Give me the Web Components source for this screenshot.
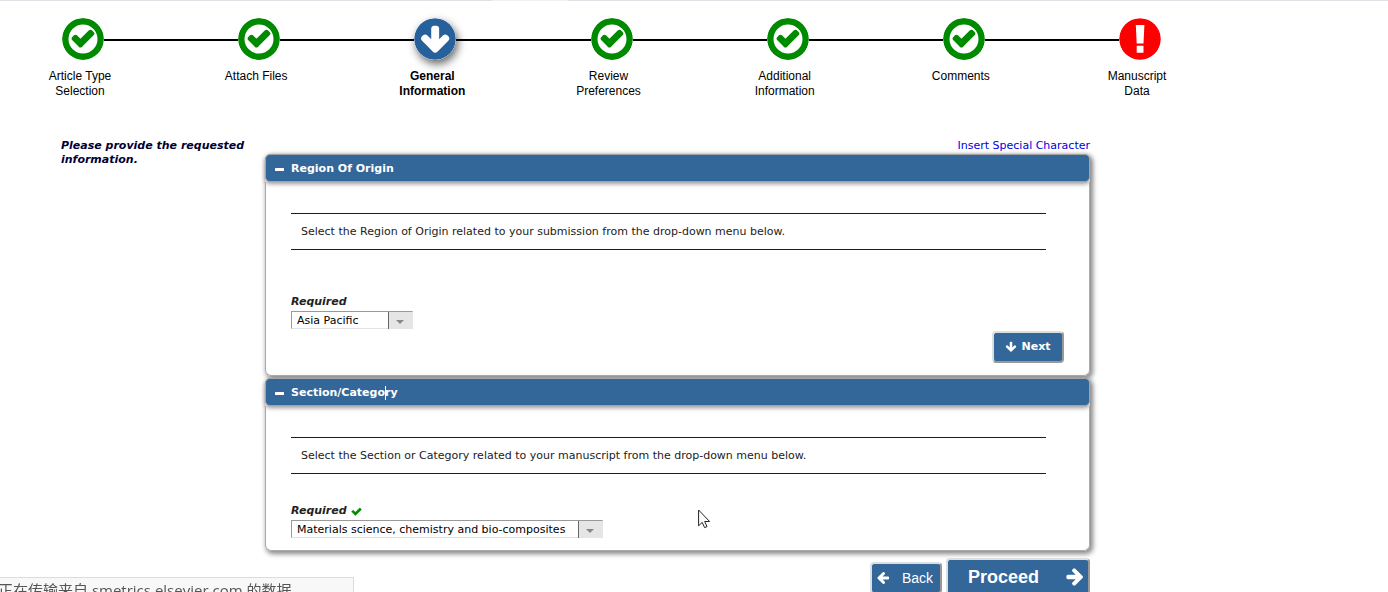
<!DOCTYPE html>
<html lang="en">
<head>
<meta charset="utf-8">
<title>General Information</title>
<style>
  body {
    margin: 0;
    background: #fff;
    color: #222;
    font: 11px/14px "DejaVu Sans", Verdana, sans-serif;
    overflow: hidden;
  }
</style>
</head>
<body>
<submission-page></submission-page>

<script>
const CHECK = "M1671 566q0 40-28 68l-724 724-136 136q-28 28-68 28t-68-28l-136-136-362-362q-28-28-28-68t28-68l136-136q28-28 68-28t68 28l294 295 656-657q28-28 68-28t68 28l136 136q28 28 28 68z";
const ARROW = "M1675 832q0 53-37 90l-651 652q-39 37-91 37-53 0-90-37l-651-652q-38-36-38-90 0-53 38-91l74-75q39-37 91-37 53 0 90 37l294 294v-704q0-52 38-90t90-38h128q52 0 90 38t38 90v704l294-294q37-37 90-37 52 0 91 37l75 75q37 39 37 91z";

const STEP_ICONS = {
  done: `
    <circle cx="21" cy="21" r="17.7" fill="#fff" stroke="#008a00" stroke-width="6.4"/>
    <path transform="translate(8.6 7.8) scale(.0138)" fill="#008a00" stroke="#008a00" stroke-width="110" d="${CHECK}"/>`,
  current: `
    <circle cx="21" cy="21" r="20.8" fill="#26619c"/>
    <path transform="translate(5.6 6.1) scale(.0174)" fill="#fff" stroke="#fff" stroke-width="70" d="${ARROW}"/>`,
  error: `
    <circle cx="21" cy="21" r="20.8" fill="#f00"/>
    <path fill="#fff" d="M16.8 7h8.6l-.9 18.4h-6.8zM17.7 27.7h6.8v7h-6.8z"/>`,
};

/** Attaches an open shadow root holding the given markup. */
function render(host, html) {
  const root = host.attachShadow({ mode: "open" });
  root.innerHTML = html;
  return root;
}

/** <progress-step state="done|current|error"> one stop of the stepper. */
class ProgressStep extends HTMLElement {
  constructor() {
    super();
    const state = this.getAttribute("state") ?? "done";
    render(this, `
      <style>
        :host { display: block; flex: 1 1 0; min-width: 120px; }
        :host(:last-child) { flex: 0 0 120px; }
        .track { display: flex; align-items: center; }
        .track::before, .track::after {
          content: "";
          height: 2px;
          padding-top: 2px;
          background: #000 content-box;
        }
        .track::before { width: 42px; }
        .track::after { flex: 1; }
        :host(:first-child) .track::before,
        :host(:last-child) .track::after { background: none; }
        svg { display: block; flex: none; width: 42px; height: 42px; border-radius: 50%; }
        :host([state="current"]) svg { box-shadow: 2px 4px 8px rgba(0, 0, 0, 0.6); }
        .label {
          width: 120px;
          margin-top: 9px;
          color: #000;
          font: 12px/15px "Liberation Sans", Arial, sans-serif;
          text-align: center;
        }
        :host([state="current"]) .label { font-weight: bold; }
      </style>
      <div class="track"><svg viewBox="0 0 42 42" aria-hidden="true">${STEP_ICONS[state]}</svg></div>
      <div class="label"><slot></slot></div>
    `);
  }
}

/** <progress-stepper> row that holds the steps. */
class ProgressStepper extends HTMLElement {
  constructor() {
    super();
    render(this, `
      <style>
        :host { display: flex; padding: 17px 191px 0 20px; }
      </style>
      <slot></slot>
    `);
  }
}

/** <form-panel> collapsible panel with a "heading" slot. */
class FormPanel extends HTMLElement {
  constructor() {
    super();
    const root = render(this, `
      <style>
        :host { display: block; border-radius: 6px; box-shadow: 2px 2px 5px 1px #888; }
        button {
          display: flex;
          align-items: center;
          gap: 7px;
          box-sizing: border-box;
          position: relative;
          width: 100%;
          height: 28px;
          padding: 2px 9px 0;
          border: 1px solid #a3a3a3;
          border-radius: 5px;
          background: #336699;
          box-shadow: 0 2px 4px #999;
          color: #fff;
          font: inherit;
          font-weight: bold;
        }
        svg { width: 9px; height: 3px; }
        .body {
          padding: 31px 25px 12px;
          border: 1px solid #aaa;
          border-top: 0;
          border-radius: 0 0 6px 6px;
          background: #fff;
        }
        .body[hidden] { display: none; }
      </style>
      <button type="button" aria-expanded="true">
        <svg viewBox="0 0 9 3" aria-hidden="true"><rect width="9" height="3" rx="0.5" fill="#fff"/></svg>
        <span><slot name="heading"></slot></span>
      </button>
      <div class="body"><slot></slot></div>
    `);
    const button = root.querySelector("button");
    const body = root.querySelector(".body");
    button.addEventListener("click", () => {
      body.hidden = !body.hidden;
      button.setAttribute("aria-expanded", String(!body.hidden));
    });
  }
}

/** <required-select value="..." complete> labelled drop-down. */
class RequiredSelect extends HTMLElement {
  constructor() {
    super();
    const check = this.hasAttribute("complete")
      ? `<svg class="check" viewBox="0 0 1792 1792" aria-hidden="true"><path fill="#008a00" stroke="#008a00" stroke-width="80" d="${CHECK}"/></svg>`
      : "";
    render(this, `
      <style>
        :host { display: flex; flex-direction: column; align-items: flex-start; gap: 2px; }
        label { display: flex; align-items: center; gap: 4px; font-weight: bold; font-style: italic; }
        .check { width: 11px; height: 11px; }
        .field { display: grid; grid-template-columns: 1fr 25px; min-width: var(--field-width, 122px); }
        select {
          grid-area: 1 / 1 / 2 / 3;
          appearance: none;
          box-sizing: border-box;
          height: 18px;
          margin: 0;
          padding: 1px 29px 0 5px;
          border: 1px solid #999;
          border-right-color: #e3e3e3;
          border-bottom-color: #e3e3e3;
          border-radius: 0;
          background: #fff;
          color: #000;
          font: inherit;
        }
        .arrow {
          grid-area: 1 / 2;
          display: flex;
          align-items: center;
          justify-content: center;
          box-sizing: border-box;
          padding: 3px 3px 0 0;
          margin-top: 1px;
          border-left: 1px solid #666;
          background: #e5e5e5;
          pointer-events: none;
          z-index: 1;
        }
        .arrow svg { width: 8px; height: 4px; }
      </style>
      <label for="choice">Required ${check}</label>
      <div class="field">
        <select id="choice"><option>${this.getAttribute("value")}</option></select>
        <span class="arrow"><svg viewBox="0 0 8 4" aria-hidden="true"><path fill="#888" d="M0 0h8L4 4z"/></svg></span>
      </div>
    `);
  }
}

/** <action-button kind="next|back|proceed"> */
class ActionButton extends HTMLElement {
  constructor() {
    super();
    render(this, `
      <style>
        :host { display: block; }
        button {
          display: flex;
          align-items: center;
          justify-content: center;
          gap: 4px;
          box-sizing: border-box;
          width: 72px;
          height: 32px;
          margin: 0;
          padding: 0;
          border: 2px solid;
          border-color: #dcdfe0 #999 #999 #dcdfe0;
          border-radius: 4px;
          background: #336699;
          color: #fff;
          font: inherit;
          font-weight: bold;
        }
        svg { width: 12px; height: 12px; }
        :host([kind="back"]) button {
          gap: 12px;
          padding-right: 3px;
          font: 14px "Liberation Sans", Arial, sans-serif;
        }
        :host([kind="back"]) svg { width: 14px; height: 14px; transform: rotate(90deg); }
        :host([kind="proceed"]) button {
          flex-direction: row-reverse;
          justify-content: space-between;
          width: 144px;
          height: 40px;
          padding: 0 3px 2px 20px;
          font: bold 18px "Liberation Sans", Arial, sans-serif;
        }
        :host([kind="proceed"]) svg { width: 20px; height: 20px; transform: rotate(-90deg); }
      </style>
      <button type="button">
        <svg viewBox="0 0 1792 1792" aria-hidden="true"><path fill="#fff" d="${ARROW}"/></svg>
        <slot></slot>
      </button>
    `);
  }
}

/** <text-caret> insertion point that takes no room in the line. */
class TextCaret extends HTMLElement {
  constructor() {
    super();
    // no whitespace in the markup, it would open a gap in the word
    render(this, `<style>
        :host { position: relative; }
        i { position: absolute; top: 0; left: 0; width: 1px; height: 14px; background: #fff; }
      </style><i></i>`);
  }
}

/** <mouse-pointer> */
class MousePointer extends HTMLElement {
  constructor() {
    super();
    render(this, `
      <style>
        :host { position: absolute; left: 698px; top: 509px; z-index: 2; pointer-events: none; }
        svg { display: block; width: 13px; height: 20px; }
      </style>
      <svg viewBox="0 0 13 20" aria-hidden="true">
        <path d="M.6 1v15.8l3.6-3.4 2.4 5.2 2.4-1-2.3-5.1h4.9z" fill="#fff" stroke="#222" stroke-width="1"/>
      </svg>`);
  }
}

/** <status-bubble> browser status text in the window corner. */
class StatusBubble extends HTMLElement {
  constructor() {
    super();
    render(this, `
      <style>
        :host {
          position: fixed;
          left: 0;
          bottom: -10px;
          box-sizing: border-box;
          width: 354px;
          height: 25px;
          border: 1px solid #dcdcdc;
          border-left: 0;
          background: #f8f8f8;
          color: #555;
          font: 15px/24px "Open Sans", "Noto Sans CJK SC", sans-serif;
          white-space: nowrap;
          text-indent: -2px;
        }
      </style>
      <slot></slot>
    `);
  }
}

/** <submission-page> the whole form. */
class SubmissionPage extends HTMLElement {
  constructor() {
    super();
    render(this, `
      <style>
        :host { display: block; }
        .edge {
          height: 1px;
          background: linear-gradient(90deg, #dee1e6 492px, #f0f2f5 492px 568px, #dee1e6 568px);
        }
        main {
          display: grid;
          grid-template-columns: 204px minmax(0, 1fr);
          margin: 40px 298px 0 61px;
        }
        .intro { margin: 0; color: #003; font-weight: bold; font-style: italic; }
        .form { display: flex; flex-direction: column; gap: 2px; }
        .form > a { align-self: flex-end; margin-bottom: -1px; color: #0000e0; text-decoration: none; }
        .note {
          margin: 0 18px 45px 0;
          padding: 11px 10px 10px;
          border: solid #002244;
          border-width: 1px 0;
        }
        .note.short { margin-bottom: 30px; }
        .next { display: flex; justify-content: flex-end; margin-top: 2px; }
        .next + * { margin: 0; }
        footer { display: flex; align-items: center; justify-content: flex-end; gap: 4px; margin-top: 5px; }
      </style>
      <div class="edge"></div>
      <progress-stepper>
        <progress-step state="done">Article Type<br>Selection</progress-step>
        <progress-step state="done">Attach Files</progress-step>
        <progress-step state="current">General<br>Information</progress-step>
        <progress-step state="done">Review<br>Preferences</progress-step>
        <progress-step state="done">Additional<br>Information</progress-step>
        <progress-step state="done">Comments</progress-step>
        <progress-step state="error">Manuscript<br>Data</progress-step>
      </progress-stepper>
      <main>
        <p class="intro">Please provide the requested information.</p>
        <div class="form">
          <a href="#characters">Insert Special Character</a>
          <form-panel>
            <span slot="heading">Region Of Origin</span>
            <p class="note">Select the Region of Origin related to your submission from the drop-down menu below.</p>
            <required-select value="Asia Pacific"></required-select>
            <div class="next"><action-button kind="next">Next</action-button></div>
          </form-panel>
          <form-panel>
            <span slot="heading">Section/Catego<text-caret></text-caret>ry</span>
            <p class="note short">Select the Section or Category related to your manuscript from the drop-down menu below.</p>
            <required-select style="--field-width: 312px" value="Materials science, chemistry and bio-composites" complete></required-select>
          </form-panel>
          <footer>
            <action-button kind="back">Back</action-button>
            <action-button kind="proceed">Proceed</action-button>
          </footer>
        </div>
      </main>
      <mouse-pointer></mouse-pointer>
      <status-bubble lang="zh-CN">正在传输来自 smetrics.elsevier.com 的数据</status-bubble>
    `);
  }
}

customElements.define("progress-step", ProgressStep);
customElements.define("progress-stepper", ProgressStepper);
customElements.define("form-panel", FormPanel);
customElements.define("required-select", RequiredSelect);
customElements.define("action-button", ActionButton);
customElements.define("text-caret", TextCaret);
customElements.define("mouse-pointer", MousePointer);
customElements.define("status-bubble", StatusBubble);
customElements.define("submission-page", SubmissionPage);
</script>
</body>
</html>
